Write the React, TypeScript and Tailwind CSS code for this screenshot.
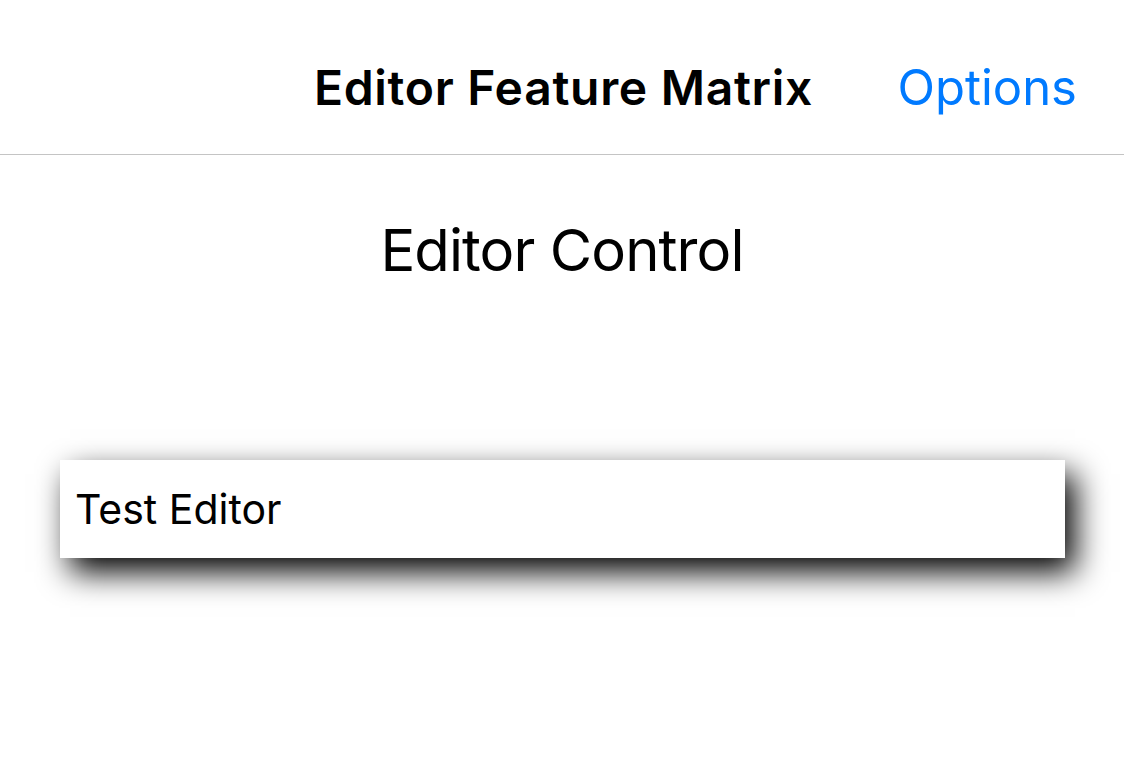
import React from "react";

export default function App() {
  return (
    <div className="w-[1124px] h-[776px] bg-white flex flex-col overflow-hidden" style={{ fontFamily: "Inter, 'Noto Sans', sans-serif" }}>
      <div className="h-[155px] shrink-0 border-b border-[#c4c4c4] bg-white flex items-end justify-center pb-[42px] relative">
        <span className="text-[48px] font-semibold text-black leading-none tracking-[0.7px] pl-[3px]">Editor Feature Matrix</span>
        <span className="absolute right-[47px] bottom-[42px] text-[49px] text-[#007aff] leading-none">Options</span>
      </div>
      <div className="flex justify-center pt-[66px]">
        <span className="text-[58px] text-black leading-none tracking-[-0.9px]">Editor Control</span>
      </div>
      <div className="pt-[181px] pl-[60px]">
        <div className="w-[1005px] h-[98px] bg-white shadow-[10px_14px_30px_rgba(0,0,0,1)] flex items-center pl-[15px]">
          <span className="text-[41px] text-black leading-none">Test Editor</span>
        </div>
      </div>
    </div>
  );
}
